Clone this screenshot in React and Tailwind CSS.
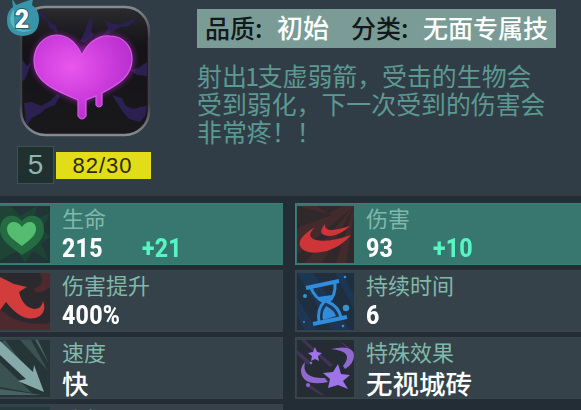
import clsx from 'clsx';

function SkillIcon() {
  return (
    <svg viewBox="0 0 132 132" className="block w-full h-full">
      <defs>
        <linearGradient id="tile" x1="0" y1="0" x2="0" y2="1">
          <stop offset="0" stopColor="#2b2b2f" />
          <stop offset="0.3" stopColor="#141317" />
          <stop offset="1" stopColor="#19181b" />
        </linearGradient>
        <radialGradient id="heart" cx="0.38" cy="0.38" r="0.65">
          <stop offset="0" stopColor="#e957ec" />
          <stop offset="0.6" stopColor="#cc3cdd" />
          <stop offset="1" stopColor="#b52fcb" />
        </radialGradient>
        <linearGradient id="rim" x1="0" y1="0" x2="0" y2="1">
          <stop offset="0" stopColor="#858b8e" />
          <stop offset="0.25" stopColor="#3b4146" />
          <stop offset="0.75" stopColor="#3b4146" />
          <stop offset="1" stopColor="#858b8e" />
        </linearGradient>
        <filter id="glow" x="-30%" y="-30%" width="160%" height="160%">
          <feGaussianBlur stdDeviation="3.5" />
        </filter>
      </defs>
      <rect x="3" y="3" width="126" height="126" rx="23" fill="url(#tile)" />
      <g fill="#2a2150">
        <path d="M22 6l10 12 5 3 2 8-8-6-3-8-9-5z" />
        <path d="M71 12l3 6-2 7 3 5-10 8-4-2 5-10z" />
        <path d="M84 31l5-8-3-7 14 4 12-5 7-3-9 9-9 1-10 6z" />
        <path d="M3 54l5 7 4-3-4 12-3 6-2-1z" />
        <path d="M128 57l-9 6-8 2 7 5 10 1z" />
        <path d="M5 98l8-1 9 4 9-5 7-7 3 2-5 9-10 4-4 4-9 5-6 8z" />
        <path d="M93 90l10 3 4 8 8 3 6-2 7-1-2 10-5 6-11-3-6-7z" />
      </g>
      <path d="M64 46C56 26 16 22 15 56c0 22 23 30 48 42 24-12 51-20 51-43 0-32-42-31-50-9z" fill="#b72ad0" opacity="0.75" filter="url(#glow)" />
      <path d="M63 50C57 37 48 30 37 30 24 31 15 42 15 56c0 21 20 29 44 39v16q4 6 8 0V95l10-4v9q3 4 6 0V88c17-9 30-17 30-34 0-13-9-23-22-23-13-1-23 8-28 19z" fill="url(#heart)" stroke="#dc5be6" strokeWidth="1.2" />
      <rect x="2" y="2" width="128" height="128" rx="24" fill="none" stroke="url(#rim)" strokeWidth="2.5" />
    </svg>
  );
}

function LevelBadge() {
  return (
    <svg viewBox="0 0 34 40" className="absolute -left-[13px] -top-[7px] w-[34px] h-[40px]">
      <path d="M6 0l4 7q10-4 17-6l-1 6q7 5 7 14 0 16-16 17Q1 37 1 22q0-9 6-13z" fill="#3894a8" />
      <path d="M8 11Q1 21 7 29q8 8 19 3Q12 34 8 25z" fill="#59b7c4" />
      <text x="16" y="30" textAnchor="middle" fontFamily="Roboto" fontWeight="900" fontSize="25" fill="#fff" stroke="#255869" strokeWidth="2" paintOrder="stroke">
        2
      </text>
    </svg>
  );
}

function HealthIcon() {
  return (
    <svg viewBox="0 0 50 57" className="block w-full h-full">
      <rect width="50" height="57" fill="#223536" />
      <path d="M11 0l9 10L37 0l-3 13 16-5-8 15 8 8-9 6 7 17-15-9-8 12-8-12-17 9V0z" fill="#1e4435" />
      <path d="M22 49C11 41 0 34 0 24 0 8 15 6 22 15 29 6 44 8 44 24c0 10-11 19-22 25z" fill="#246d43" />
      <path d="M22 40C14 34 7 30 7 23c0-8 10-10 15-2 5-8 14-6 14 2 0 7-8 12-14 17z" fill="#55bd70" />
    </svg>
  );
}

function BoostIcon() {
  return (
    <svg viewBox="0 0 50 57" className="block w-full h-full">
      <rect width="50" height="57" fill="#2b292d" />
      <path d="M50 0v14Q38 24 33 16 46 12 40 0z" fill="#4e2a2e" />
      <path d="M0 36q18 18 50 14v7H0z" fill="#4e2a2e" />
      <path d="M0 4l14 7 13 3-8 5q4 16 16 17 7-1 8-8 4 9-3 15-16 9-34-14L0 37z" fill="#d23c3b" />
    </svg>
  );
}

function SpeedIcon() {
  return (
    <svg viewBox="0 0 50 57" className="block w-full h-full">
      <rect width="50" height="57" fill="#263538" />
      <path d="M20 0l28 31L31 0zM0 22l32 31L0 47zM0 3l35 37L5 0z" fill="#3a5251" />
      <path d="M35 0h3l11 24zM0 49l42 6H0z" fill="#49625f" />
      <path d="M0 1l33 31 1-7 10 27-26-11 8-2L0 15z" fill="#86aaa9" />
    </svg>
  );
}

function DamageIcon() {
  return (
    <svg viewBox="0 0 57 57" className="block w-full h-full">
      <rect width="57" height="57" fill="#432b2d" />
      <path d="M57 0L25 57h14zM57 0L0 49v8h8zM0 0l35 9L0 22zM57 8L49 57h8zM20 0h25l-14 8z" fill="#31282b" />
      <path d="M18 21q-10 10 1 13 12 3 35-5-9 11-24 16Q8 50 3 40 0 32 18 21z" fill="#cf3438" />
      <path d="M28 18q-1 6 7 6 9-1 18-4-8 8-19 10-16 0-6-12z" fill="#cf3438" />
    </svg>
  );
}

function DurationIcon() {
  return (
    <svg viewBox="0 0 57 57" className="block w-full h-full">
      <rect width="57" height="57" fill="#1f2f40" />
      <path d="M0 0l35 57h18L16 0zM38 0h8l11 24v12zM0 25l20 32H8L0 43z" fill="#1d3653" />
      <g fill="none" stroke="#318ddb">
        <path strokeWidth="4" d="M9 15l33-7M16 51l34-7" />
        <path strokeWidth="3" d="M14 15q4 10 13 14-7 7-5 20M38 10q1 13-7 19 10 4 13 15" />
      </g>
      <path d="M21 24l14-2q-2 5-6 7-5-1-8-5zM29 33q8 4 10 10l-13 4q-2-7 3-14z" fill="#318ddb" />
      <g fill="#3f8fcb">
        <circle cx="49" cy="35" r="3.2" />
        <circle cx="8" cy="23" r="2" />
        <circle cx="48" cy="4" r="1.3" />
        <circle cx="46" cy="53" r="1.3" />
        <circle cx="7" cy="49" r="1" />
      </g>
    </svg>
  );
}

function EffectIcon() {
  return (
    <svg viewBox="0 0 57 57" className="block w-full h-full">
      <rect width="57" height="57" fill="#252c33" />
      <path d="M8 0l28 25-3 2L4 0zM42 0l11 8-1 3zM0 10l14 12-3 3-11-11zM12 44l15 11h-3L10 47z" fill="#423358" />
      <path d="M34 9q22-5 23 6 0 9-9 14l-2-3q8-10 0-14-4-2-12-3z" fill="#9069d0" />
      <path d="M8 22q-4 17 20 16l3 4Q5 47 4 31q0-5 4-9z" fill="#9069d0" />
      <path d="M41 24l3 10 9 1-7 6 5 8-10-4-10 3 2-9-7-6 10-1z" fill="#9d74ea" />
      <path d="M18 7l2 5 5 1-4 3 1 5-4-2-4 2 1-5-4-3 5-1z" fill="#9d74ea" />
      <circle cx="11" cy="45" r="2" fill="#9069d0" />
      <circle cx="14" cy="23" r="1.3" fill="#9069d0" />
    </svg>
  );
}

const leftStats = [
  { label: '生命', value: '215', bonus: '+21', icon: HealthIcon },
  { label: '伤害提升', value: '400%', icon: BoostIcon },
  { label: '速度', value: '快', icon: SpeedIcon, text: true },
];

const rightStats = [
  { label: '伤害', value: '93', bonus: '+10', icon: DamageIcon },
  { label: '持续时间', value: '6', icon: DurationIcon },
  { label: '特殊效果', value: '无视城砖', icon: EffectIcon, text: true },
];

function Stat({ stat, side }) {
  const Icon = stat.icon;
  return (
    <div
      className={clsx(
        'flex h-[62px] border-y',
        side === 'right' && 'border-l pl-px',
        stat.bonus ? 'bg-[#377770] border-[#398079]' : 'bg-[#364249] border-[#3a464c]'
      )}
    >
      <div className={clsx('h-[57px] mt-[2px] shrink-0', side === 'left' ? 'w-[50px]' : 'w-[57px]')}>
        <Icon />
      </div>
      <div className="ml-3 whitespace-nowrap">
        <div className="h-[30px] leading-[27px] text-[22px] text-[#80b9a9]">{stat.label}</div>
        {stat.text ? (
          <div className="h-[30px] leading-[30px] text-[26.5px] font-medium text-white">{stat.value}</div>
        ) : (
          <div className="flex h-[28px] leading-[28px] font-[Roboto] text-[26px] tracking-[0.3px] font-extrabold">
            <span className={clsx('origin-left scale-x-[0.89] text-white', side === 'left' ? 'w-[80px]' : 'w-[67px]')}>
              {stat.value}
            </span>
            {stat.bonus && <span className="origin-left scale-x-[0.89] text-[#56f5c1]">{stat.bonus}</span>}
          </div>
        )}
      </div>
    </div>
  );
}

export default function App() {
  return (
    <div className="w-[581px] h-[410px] overflow-hidden bg-[#232d35] font-['Noto_Sans_CJK_SC',sans-serif]">
      <header className="flex h-[196px] bg-[#303d46]">
        <div className="w-[197px] shrink-0">
          <div className="relative ml-[19px] mt-[5px] w-[132px] h-[132px]">
            <SkillIcon />
            <LevelBadge />
          </div>
          <div className="flex items-center mt-[9px] ml-[17px] h-[38px] gap-[2px] font-['Liberation_Sans']">
            <div className="flex items-center justify-center w-[37px] h-[38px] bg-[#20302f] border border-[#3c5352] text-[28px] text-[#8db5b1]">
              5
            </div>
            <div className="flex items-center justify-center w-[95px] h-[27px] pr-[2px] bg-[#e2dc19] text-[22px] tracking-[1px] text-[#292a10]">
              82/30
            </div>
          </div>
        </div>
        <div className="pt-[9px] whitespace-nowrap">
          <div className="flex items-center w-[359px] h-[39px] pl-2 pb-[3px] bg-[#7b9c96] text-[25px] leading-none font-medium text-[#11191b]">
            <span className="w-[72px]">品质:</span>
            <span className="w-[74px] text-[26px] text-white">初始</span>
            <span className="w-[72px]">分类:</span>
            <span className="text-white">无面专属技</span>
          </div>
          <p className="mt-[13px] text-[24.9px] leading-[28px] text-[#5b9991]">
            射出<span className="-mx-[1.5px]">1</span>支虚弱箭，受击的生物会
            <br />
            受到弱化，下一次受到的伤害会
            <br />
            非常疼！！
          </p>
        </div>
      </header>

      <main className="grid grid-cols-[283px_286px] gap-x-3 pt-[7px]">
        <div className="flex flex-col gap-[5px]">
          {leftStats.map((stat) => (
            <Stat key={stat.label} stat={stat} side="left" />
          ))}
          <div className="flex h-[62px] bg-[#364249]">
            <div className="w-[50px] h-[57px] mt-[3px] bg-[#243b3d]" />
            <div className="ml-3 pt-px leading-[27px] text-[22px] text-[#80b9a9]">冷却</div>
          </div>
        </div>
        <div className="flex flex-col gap-[5px]">
          {rightStats.map((stat) => (
            <Stat key={stat.label} stat={stat} side="right" />
          ))}
        </div>
      </main>
    </div>
  );
}
